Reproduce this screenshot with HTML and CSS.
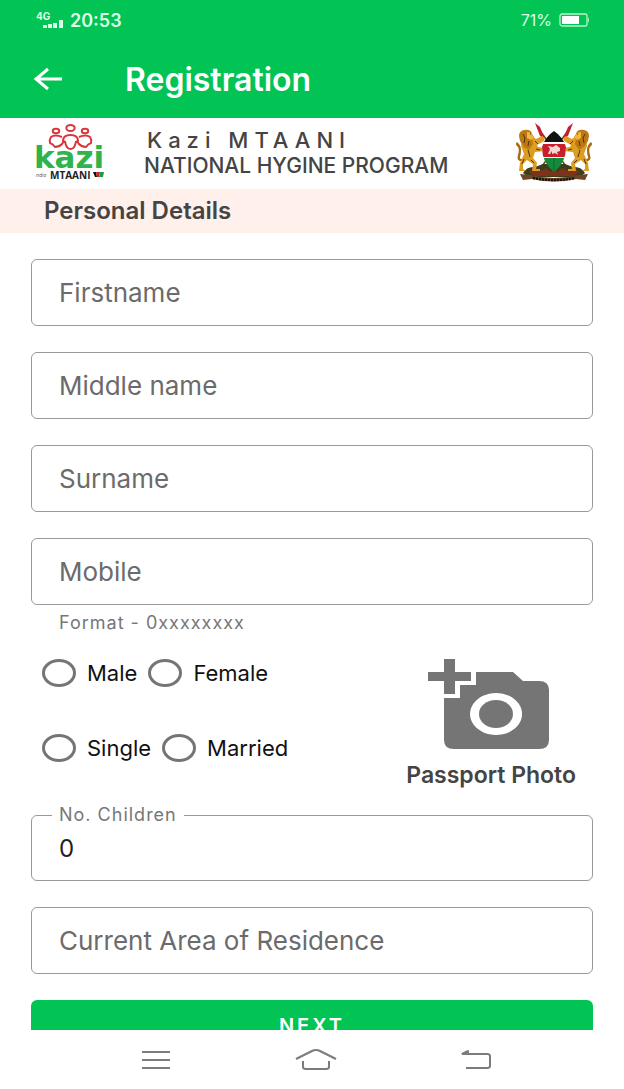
FILE: index.html
```html
<!DOCTYPE html>
<html lang="en">
<head>
  <meta charset="UTF-8">
  <meta name="viewport" content="width=device-width, initial-scale=1.0">
  <title>Registration</title>
  <link rel="stylesheet" href="styles.css">
</head>
<body>
  <header class="header">
    <div class="status">
      <svg class="signal" viewBox="0 0 28 18" aria-hidden="true">
        <text x="0" y="9">4G</text>
        <path d="M7 14h4v3H7zM12 13h4v4h-4zM17 12h4v5h-4zM23 9h4v8h-4z"/>
      </svg>
      <span class="clock">20:53</span>
      <span class="percent">71%</span>
      <svg class="battery" viewBox="0 0 31 14" aria-hidden="true">
        <rect x="1" y="1" width="27" height="12" rx="2" fill="none" stroke="#b5f5cd" stroke-width="1.3"/>
        <path d="M29 4q2 3 0 6z" fill="#b5f5cd"/>
        <rect x="3" y="3" width="17" height="8" fill="#fff"/>
      </svg>
    </div>
    <div class="toolbar">
      <a class="back" href="#" aria-label="Back">
        <svg viewBox="0 0 30 24"><path d="M15 2L3 12l12 10M3 12h26"/></svg>
      </a>
      <h1>Registration</h1>
    </div>
  </header>

  <main class="content">
    <div class="brand">
      <svg class="logo" viewBox="0 0 74 60" role="img" aria-label="Kazi Mtaani">
        <g class="people">
          <ellipse cx="35.5" cy="5" rx="4.2" ry="3"/>
          <ellipse cx="21" cy="8" rx="3.2" ry="2.2"/>
          <ellipse cx="50" cy="8" rx="3.2" ry="2.2"/>
          <path d="M30 19l-2-1q0-6 7.500-6t7.500 6l-2 1M30 18q1 8 5.500 8t5.500-8"/>
          <path d="M27 14q-7-3-11 0-2 3-1 6 3 1 5 4 4 0 7-3l2-3"/>
          <path d="M44 14q7-3 11 0 2 3 1 6-3 1-5 4-4 0-7-3l-2-3"/>
        </g>
        <text class="word" x="-1" y="45">kazi</text>
        <text class="tiny" x="1" y="54">ndio</text>
        <text class="sub" x="15" y="56">MTAANI</text>
        <path d="M58 49h3l1 5h-2z" fill="#111"/>
        <path d="M61 49h4l-1 5h-2z" fill="#d0212b"/>
        <path d="M65 49h4l-1 5h-4z" fill="#1b9c45"/>
      </svg>
      <div class="brand-text">
        <p class="brand-name">Kazi MTAANI</p>
        <p class="brand-program">NATIONAL HYGINE PROGRAM</p>
      </div>
      <svg class="emblem" viewBox="0 0 78 60" role="img" aria-label="Coat of arms of Kenya">
        <!-- spears -->
        <path d="M23 5L56 50M55 5L22 50" stroke="#6b3a1a" stroke-width="1.4"/>
        <path d="M20 0l5 4 5 12-5-3zM58 0l-5 4-5 12 5-3z" fill="#c41f2e"/>
        <!-- ground and ribbon -->
        <path d="M8 50q4-7 12-6l8-3h22l8 3q8-1 12 6l-5 4H13z" fill="#3c3d1c"/>
        <path d="M14 49l6-5 5 4 6-3 4 4 4-3 4 3 4-4 6 3 5-4 6 5-5 4H19z" fill="#7d321c"/>
        <path d="M5 51l10 1q24 6 48 0l10-1-3 6-9-1q-22 5-44 0l-9 1z" fill="#6b4525"/>
        <path d="M18 55q21 4 42 0" fill="none" stroke="#1c120b" stroke-width="2.400" stroke-dasharray="2 1"/>
        <!-- the right lion is the left one mirrored -->
        <g id="lion">
          <path d="M8 38q-7 1-5-6t-1-9q-2-2 0-4 4 3 4 8t-1 7 3 2z" fill="#a8690f"/>
          <path d="M7 16l10-3 4 3 6-3 3 2-1 3-7 4 1 2 7 1v3l-10 1-2 6 4 5-1 6h4v2h-8l1-7-6-4-4 4v5l3 2H4l1-8 4-9-3-8z" fill="#dc9d22"/>
          <path d="M5 18l-1-5q0-5 5-6 7-1 8 4l2 3-2 2 1 5-4 6-5-3z" fill="#bd7814"/>
          <path d="M12 9q4 0 5 3l2 2-3 3-4-2z" fill="#efb640"/>
          <path d="M15 11h1M8 11l2 4-1 5M14 18l-1 5M13 27l2 7M20 18l3 3M21 26l4 1M9 36l-2 5M16 37l3 3" fill="none" stroke="#573206" stroke-width="1"/>
        </g>
        <use href="#lion" transform="matrix(-1 0 0 1 78 0)"/>
        <!-- shield -->
        <clipPath id="shield"><path d="M39 8q9 6 12 16 0 16-12 25-12-9-12-25 3-10 12-16z"/></clipPath>
        <g clip-path="url(#shield)">
          <path d="M26 6h26v14H26z" fill="#111"/>
          <path d="M26 19h26v17H26z" fill="#fff"/>
          <path d="M26 21h26v13H26z" fill="#c91f2d"/>
          <path d="M26 35h26v15H26z" fill="#158a3b"/>
          <path d="M39 35v14" stroke="#0c6a2b" stroke-width="1"/>
        </g>
        <path d="M33 31l2-5-2-3 5 1 3-2 4 3v3l-3 1 1 3-3-2-3 1v-3l-2 3z" fill="#f3d7d4"/>
      </svg>
    </div>

    <h2 class="section-title">Personal Details</h2>

    <form class="form">
      <input class="field" type="text" placeholder="Firstname" aria-label="Firstname">
      <input class="field" type="text" placeholder="Middle name" aria-label="Middle name">
      <input class="field" type="text" placeholder="Surname" aria-label="Surname">
      <input class="field" type="tel" placeholder="Mobile" aria-label="Mobile" aria-describedby="mobileHelp">
      <p class="helper" id="mobileHelp">Format - 0xxxxxxxx</p>

      <div class="details">
        <div class="choices">
          <div class="radio-row">
            <label><input type="radio" name="gender">Male</label>
            <label><input type="radio" name="gender">Female</label>
          </div>
          <div class="radio-row">
            <label><input type="radio" name="status">Single</label>
            <label><input type="radio" name="status">Married</label>
          </div>
        </div>
        <button class="photo" type="button">
          <svg viewBox="0 0 127 90" aria-hidden="true">
            <path d="M16 0h11v13h16v9H27v13H16V22H0v-9h16z"/>
            <path fill-rule="evenodd" d="M48 13h37l10 9h16q10 0 10 9v50q0 9-10 9H26q-10 0-10-9V39h16V26h16zM68 34a26 21 0 1 0 .1 0z"/>
            <ellipse cx="68" cy="55" rx="17" ry="14"/>
          </svg>
          Passport Photo
        </button>
      </div>

      <fieldset class="outlined">
        <legend><label for="children">No. Children</label></legend>
        <input id="children" type="text" inputmode="numeric" value="0">
      </fieldset>
      <input class="field" type="text" placeholder="Current Area of Residence" aria-label="Current Area of Residence">
      <button class="next" type="submit">NEXT</button>
    </form>
  </main>

  <nav class="navbar">
    <button type="button" aria-label="Recent apps">
      <svg viewBox="0 0 42 24"><path d="M7 4h28M7 12h28M7 20h28"/></svg>
    </button>
    <button type="button" aria-label="Home">
      <svg viewBox="0 0 42 24"><path d="M1 11L17 3q4-2 8 0l16 8M8 13v6q0 2 3 2h20q3 0 3-2v-6"/></svg>
    </button>
    <button type="button" aria-label="Go back">
      <svg viewBox="0 0 42 24"><path d="M13 3L7 6h25q3 0 3 2v10q0 2-3 2H11"/><path d="M14 2v4H6z" class="tip"/></svg>
    </button>
  </nav>
</body>
</html>
```

FILE: styles.css
```css
* {
  box-sizing: border-box;
}

body {
  margin: 0;
  height: 100vh;
  display: flex;
  flex-direction: column;
  background-color: #fff;
  font-family: Inter, Roboto, sans-serif;
  color: #444;
}

h1, h2, p {
  margin: 0;
}

button {
  border: none;
  padding: 0;
  background: none;
  font-family: inherit;
  cursor: pointer;
}

.header {
  flex: none;
  background-color: #02c455;
  color: #fff;
}

.status {
  display: flex;
  align-items: center;
  height: 40px;
  padding: 0 34px 0 36px;
  color: #dcffe8;
}

.signal {
  width: 28px;
  height: 18px;
  margin-right: 6px;
  overflow: visible;
  fill: #dcffe8;
  font-size: 10px;
  font-weight: 700;
}

.clock {
  font-size: 18px;
  font-weight: 600;
}

.percent {
  margin-left: auto;
  margin-right: 7px;
  font-size: 16px;
}

.battery {
  width: 31px;
  height: 14px;
}

.toolbar {
  display: flex;
  align-items: center;
  height: 78px;
  padding: 0 33px;
}

.back {
  display: flex;
  margin-right: 62px;
}

.back svg {
  width: 30px;
  height: 24px;
  fill: none;
  stroke: #fff;
  stroke-width: 3;
}

.toolbar h1 {
  font-size: 32px;
  font-weight: 600;
}

.content {
  flex: 1;
  min-height: 0;
  overflow: hidden;
}

.brand {
  display: flex;
  align-items: center;
  height: 71px;
  padding: 0 31px 2px 35px;
}

.logo {
  width: 74px;
  height: 60px;
}

.people {
  fill: none;
  stroke: #d8363c;
  stroke-width: 2;
}

.word {
  font-family: "DejaVu Sans", sans-serif;
  font-size: 31px;
  font-weight: 700;
  fill: #2fb34a;
}

.tiny {
  font-size: 5px;
  font-style: italic;
  fill: #555;
}

.sub {
  font-family: "Open Sans", sans-serif;
  font-size: 10px;
  font-weight: 700;
  fill: #222;
}

.brand-text {
  margin-left: 35px;
  font-weight: 500;
}

.brand-name {
  padding-left: 3px;
  font-size: 22px;
  line-height: 26px;
  letter-spacing: 6px;
}

.brand-program {
  font-size: 21px;
  line-height: 26px;
}

.emblem {
  width: 78px;
  height: 60px;
  margin-left: auto;
}

.section-title {
  padding: 0 44px;
  background-color: #fff0eb;
  font-size: 24px;
  font-weight: 600;
  line-height: 44px;
}

.form {
  display: flex;
  flex-direction: column;
  gap: 26px;
  padding: 26px 31px;
}

.field {
  width: 100%;
  height: 67px;
  padding: 0 27px;
  border: 1px solid #999;
  border-radius: 6px;
  font-family: inherit;
  font-size: 26px;
  color: #222;
}

.field::placeholder {
  color: #6b6b6b;
  opacity: 1;
}

.helper {
  margin-top: -18px;
  padding: 0 28px;
  font-size: 18px;
  line-height: 20px;
  letter-spacing: 1px;
  color: #777;
}

.details {
  display: flex;
  justify-content: space-between;
  padding: 0 17px 0 11px;
}

.choices {
  display: flex;
  flex-direction: column;
  gap: 47px;
}

.radio-row {
  display: flex;
  gap: 11px;
}

.radio-row label {
  display: flex;
  align-items: center;
  font-size: 22px;
  line-height: 28px;
  color: #111;
}

.radio-row input {
  appearance: none;
  width: 34px;
  height: 28px;
  margin: 0 11px 0 0;
  border: 3px solid #757575;
  border-radius: 50%;
}

.radio-row input:checked {
  background-color: #02c455;
}

.photo {
  display: flex;
  flex-direction: column;
  align-items: center;
  gap: 12px;
  color: #444;
  font-size: 23px;
  font-weight: 600;
  line-height: 28px;
}

.photo svg {
  width: 127px;
  height: 90px;
  fill: #757575;
}

.outlined {
  min-width: 0;
  height: 76px;
  margin: -10px 0 0;
  padding: 0 27px;
  border: 1px solid #999;
  border-radius: 6px;
}

.outlined legend {
  margin-left: -7px;
  padding: 0 7px;
  font-size: 18px;
  line-height: 20px;
  letter-spacing: 1px;
  color: #777;
}

.outlined input {
  width: 100%;
  height: 46px;
  padding: 0;
  border: none;
  outline: none;
  font-family: inherit;
  font-size: 24px;
  color: #222;
}

.next {
  flex: none;
  height: 52px;
  border-radius: 6px;
  background-color: #02c455;
  color: #fff;
  font-size: 20px;
  font-weight: 600;
  letter-spacing: 3px;
}

.navbar {
  flex: none;
  display: flex;
  justify-content: space-between;
  align-items: center;
  height: 59px;
  padding: 0 127px 0 135px;
  background-color: #fff;
}

.navbar svg {
  display: block;
  width: 42px;
  height: 24px;
  fill: none;
  stroke: #7c7c7c;
  stroke-width: 2;
}

.navbar .tip {
  fill: #7c7c7c;
  stroke: none;
}
```
